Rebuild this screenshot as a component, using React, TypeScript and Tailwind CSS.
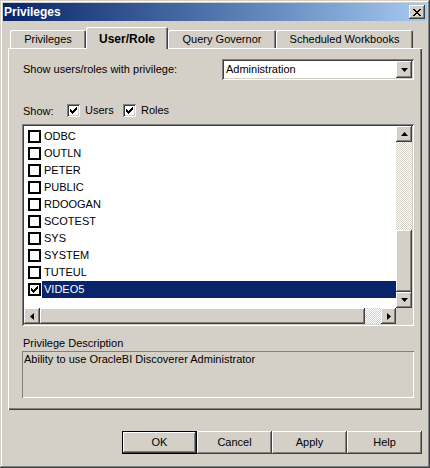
import React from 'react';

const users = ['ODBC', 'OUTLN', 'PETER', 'PUBLIC', 'RDOOGAN', 'SCOTEST', 'SYS', 'SYSTEM', 'TUTEUL', 'VIDEO5'];

const raised =
  'shadow-[inset_-1px_-1px_#404040,inset_1px_1px_#ffffff,inset_-2px_-2px_#808080,inset_2px_2px_#d4d0c8]';
const sunken =
  'shadow-[inset_1px_1px_#808080,inset_-1px_-1px_#ffffff,inset_2px_2px_#404040,inset_-2px_-2px_#d4d0c8]';
const dither = 'bg-[repeating-conic-gradient(#ffffff_0%_25%,#d4d0c8_0%_50%)] bg-[length:2px_2px]';

// pixel check mark, 7x7
const checkPx = [
  [6, 0], [5, 1], [6, 1], [0, 2], [4, 2], [5, 2], [6, 2], [0, 3], [1, 3], [3, 3], [4, 3], [5, 3],
  [0, 4], [1, 4], [2, 4], [3, 4], [4, 4], [1, 5], [2, 5], [3, 5], [2, 6],
];

const closePx = [
  [0, 0], [1, 0], [6, 0], [7, 0], [1, 1], [2, 1], [5, 1], [6, 1], [2, 2], [3, 2], [4, 2], [5, 2],
  [3, 3], [4, 3], [2, 4], [3, 4], [4, 4], [5, 4], [1, 5], [2, 5], [5, 5], [6, 5], [0, 6], [1, 6], [6, 6], [7, 6],
];

const Pixels = ({ px, w, h }: { px: number[][]; w: number; h: number }) => (
  <svg width={w} height={h} viewBox={`0 0 ${w} ${h}`} shapeRendering="crispEdges">
    {px.map(([x, y]) => (
      <rect key={`${x}-${y}`} x={x} y={y} width="1" height="1" fill="#000" />
    ))}
  </svg>
);

const Arrow = ({ dir }: { dir: 'up' | 'down' | 'left' | 'right' }) => {
  const pts = {
    up: '3.5,0 7,4 0,4',
    down: '0,0 7,0 3.5,4',
    left: '4,0 4,7 0,3.5',
    right: '0,0 4,3.5 0,7',
  }[dir];
  const vertical = dir === 'up' || dir === 'down';
  return (
    <svg width={vertical ? 7 : 4} height={vertical ? 4 : 7} viewBox={vertical ? '0 0 7 4' : '0 0 4 7'}>
      <polygon points={pts} fill="#000" />
    </svg>
  );
};

const ScrollBtn = ({ dir, className = '' }: { dir: 'up' | 'down' | 'left' | 'right'; className?: string }) => (
  <div className={`bg-[#d4d0c8] flex items-center justify-center ${raised} ${className}`}>
    <Arrow dir={dir} />
  </div>
);

const Win2kCheck = ({ label, className = '' }: { label: string; className?: string }) => (
  <div className={`flex items-center ${className}`}>
    <div className={`w-[13px] h-[13px] bg-white flex items-center justify-center ${sunken}`}>
      <Pixels px={checkPx} w={7} h={7} />
    </div>
    <span className="ml-[5px]">{label}</span>
  </div>
);

const Tab = ({ label, width, active = false }: { label: string; width: string; active?: boolean }) => (
  <div
    className={
      active
        ? `${width} h-[22px] mb-[-1px] relative z-10 bg-[#d4d0c8] rounded-t-[2px] font-bold text-[12px] flex items-center justify-center pt-[2px] shadow-[inset_1px_1px_#ffffff,inset_-1px_0_#404040,inset_-2px_0_#808080]`
        : `${width} h-[18px] bg-[#d4d0c8] rounded-t-[2px] flex items-center justify-center pt-[1px] shadow-[inset_1px_1px_#ffffff,inset_-1px_0_#404040,inset_-2px_0_#808080]`
    }
  >
    {label}
  </div>
);

const DlgButton = ({ label, isDefault = false }: { label: string; isDefault?: boolean }) => (
  <div
    className={`w-[75px] h-[23px] bg-[#d4d0c8] flex items-center justify-center ${
      isDefault
        ? 'shadow-[inset_0_0_0_1px_#000000,inset_-2px_-2px_#404040,inset_2px_2px_#ffffff,inset_-3px_-3px_#808080]'
        : raised
    }`}
  >
    {label}
  </div>
);

export default function App() {
  return (
    <div
      className="w-[430px] h-[468px] bg-[#d4d0c8] p-[3px] flex flex-col text-[11px] text-black font-['Liberation_Sans',Arial,sans-serif] shadow-[inset_-1px_-1px_#404040,inset_1px_1px_#d4d0c8,inset_-2px_-2px_#808080,inset_2px_2px_#ffffff]"
    >
      {/* title bar */}
      <div className="h-[18px] flex items-center justify-between pl-[1px] pr-[2px] bg-gradient-to-r from-[#0a246a] to-[#a6caf0]">
        <span className="text-white font-bold text-[12px] leading-none">Privileges</span>
        <div className={`w-[16px] h-[14px] bg-[#d4d0c8] flex items-center justify-center ${raised}`}>
          <Pixels px={closePx} w={8} h={7} />
        </div>
      </div>

      <div className="px-[5px] pt-[6px] flex flex-col">
        {/* tabs */}
        <div className="h-[21px] flex items-end pl-[2px]">
          <Tab label="Privileges" width="w-[76px]" />
          <Tab label="User/Role" width="w-[82px]" active />
          <Tab label="Query Governor" width="w-[108px]" />
          <Tab label="Scheduled Workbooks" width="w-[137px]" />
        </div>

        {/* panel */}
        <div className="h-[362px] pl-[14px] pr-[8px] pt-[11px] flex flex-col shadow-[inset_1px_1px_#ffffff,inset_-1px_-1px_#404040,inset_-2px_-2px_#808080]">
          <div className="h-[21px] flex items-center justify-between">
            <span className="pl-[1px]">Show users/roles with privilege:</span>
            <div className={`w-[192px] h-[21px] bg-white flex items-center justify-between pl-[4px] pr-[2px] ${sunken}`}>
              <span>Administration</span>
              <ScrollBtn dir="down" className="w-[16px] h-[17px]" />
            </div>
          </div>

          <div className="mt-[24px] h-[13px] flex items-center">
            <span className="w-[45px] pl-[1px] pt-[2px]">Show:</span>
            <Win2kCheck label="Users" className="w-[56px]" />
            <Win2kCheck label="Roles" />
          </div>

          {/* list */}
          <div className={`mt-[7px] h-[202px] bg-white p-[2px] grid grid-cols-[1fr_16px] grid-rows-[1fr_16px] ${sunken}`}>
            <div className="pt-[2px] overflow-hidden">
              {users.map((u) => {
                const selected = u === 'VIDEO5';
                return (
                  <div key={u} className="h-[17px] flex items-center pl-[4px]">
                    <div className="w-[13px] h-[13px] border-2 border-black bg-white flex items-center justify-center">
                      {selected && <Pixels px={checkPx} w={7} h={7} />}
                    </div>
                    <div
                      className={`ml-[1px] pl-[2px] flex-1 h-full flex items-center ${
                        selected ? 'bg-[#0a246a] text-white' : ''
                      }`}
                    >
                      {u}
                    </div>
                  </div>
                );
              })}
            </div>
            <div className="flex flex-col">
              <ScrollBtn dir="up" className="h-[16px]" />
              <div className={`flex-1 ${dither}`} />
              <div className={`h-[62px] bg-[#d4d0c8] ${raised}`} />
              <ScrollBtn dir="down" className="h-[16px]" />
            </div>
            <div className="flex">
              <ScrollBtn dir="left" className="w-[16px]" />
              <div className={`flex-1 bg-[#d4d0c8] ${raised}`} />
              <div className={`w-[16px] ${dither}`} />
              <ScrollBtn dir="right" className="w-[15px]" />
            </div>
            <div className="bg-[#d4d0c8]" />
          </div>

          <div className="mt-[10px] h-[14px] leading-[14px] pl-[1px]">Privilege Description</div>
          <div className="mt-[1px] h-[47px] pl-[2px] pt-[1px] leading-[14px] shadow-[inset_1px_1px_#808080,inset_-1px_-1px_#ffffff]">
            Ability to use OracleBI Discoverer Administrator
          </div>
        </div>
      </div>

      {/* buttons */}
      <div className="mt-[21px] px-[5px] flex justify-end">
        <DlgButton label="OK" isDefault />
        <DlgButton label="Cancel" />
        <DlgButton label="Apply" />
        <DlgButton label="Help" />
      </div>
    </div>
  );
}
